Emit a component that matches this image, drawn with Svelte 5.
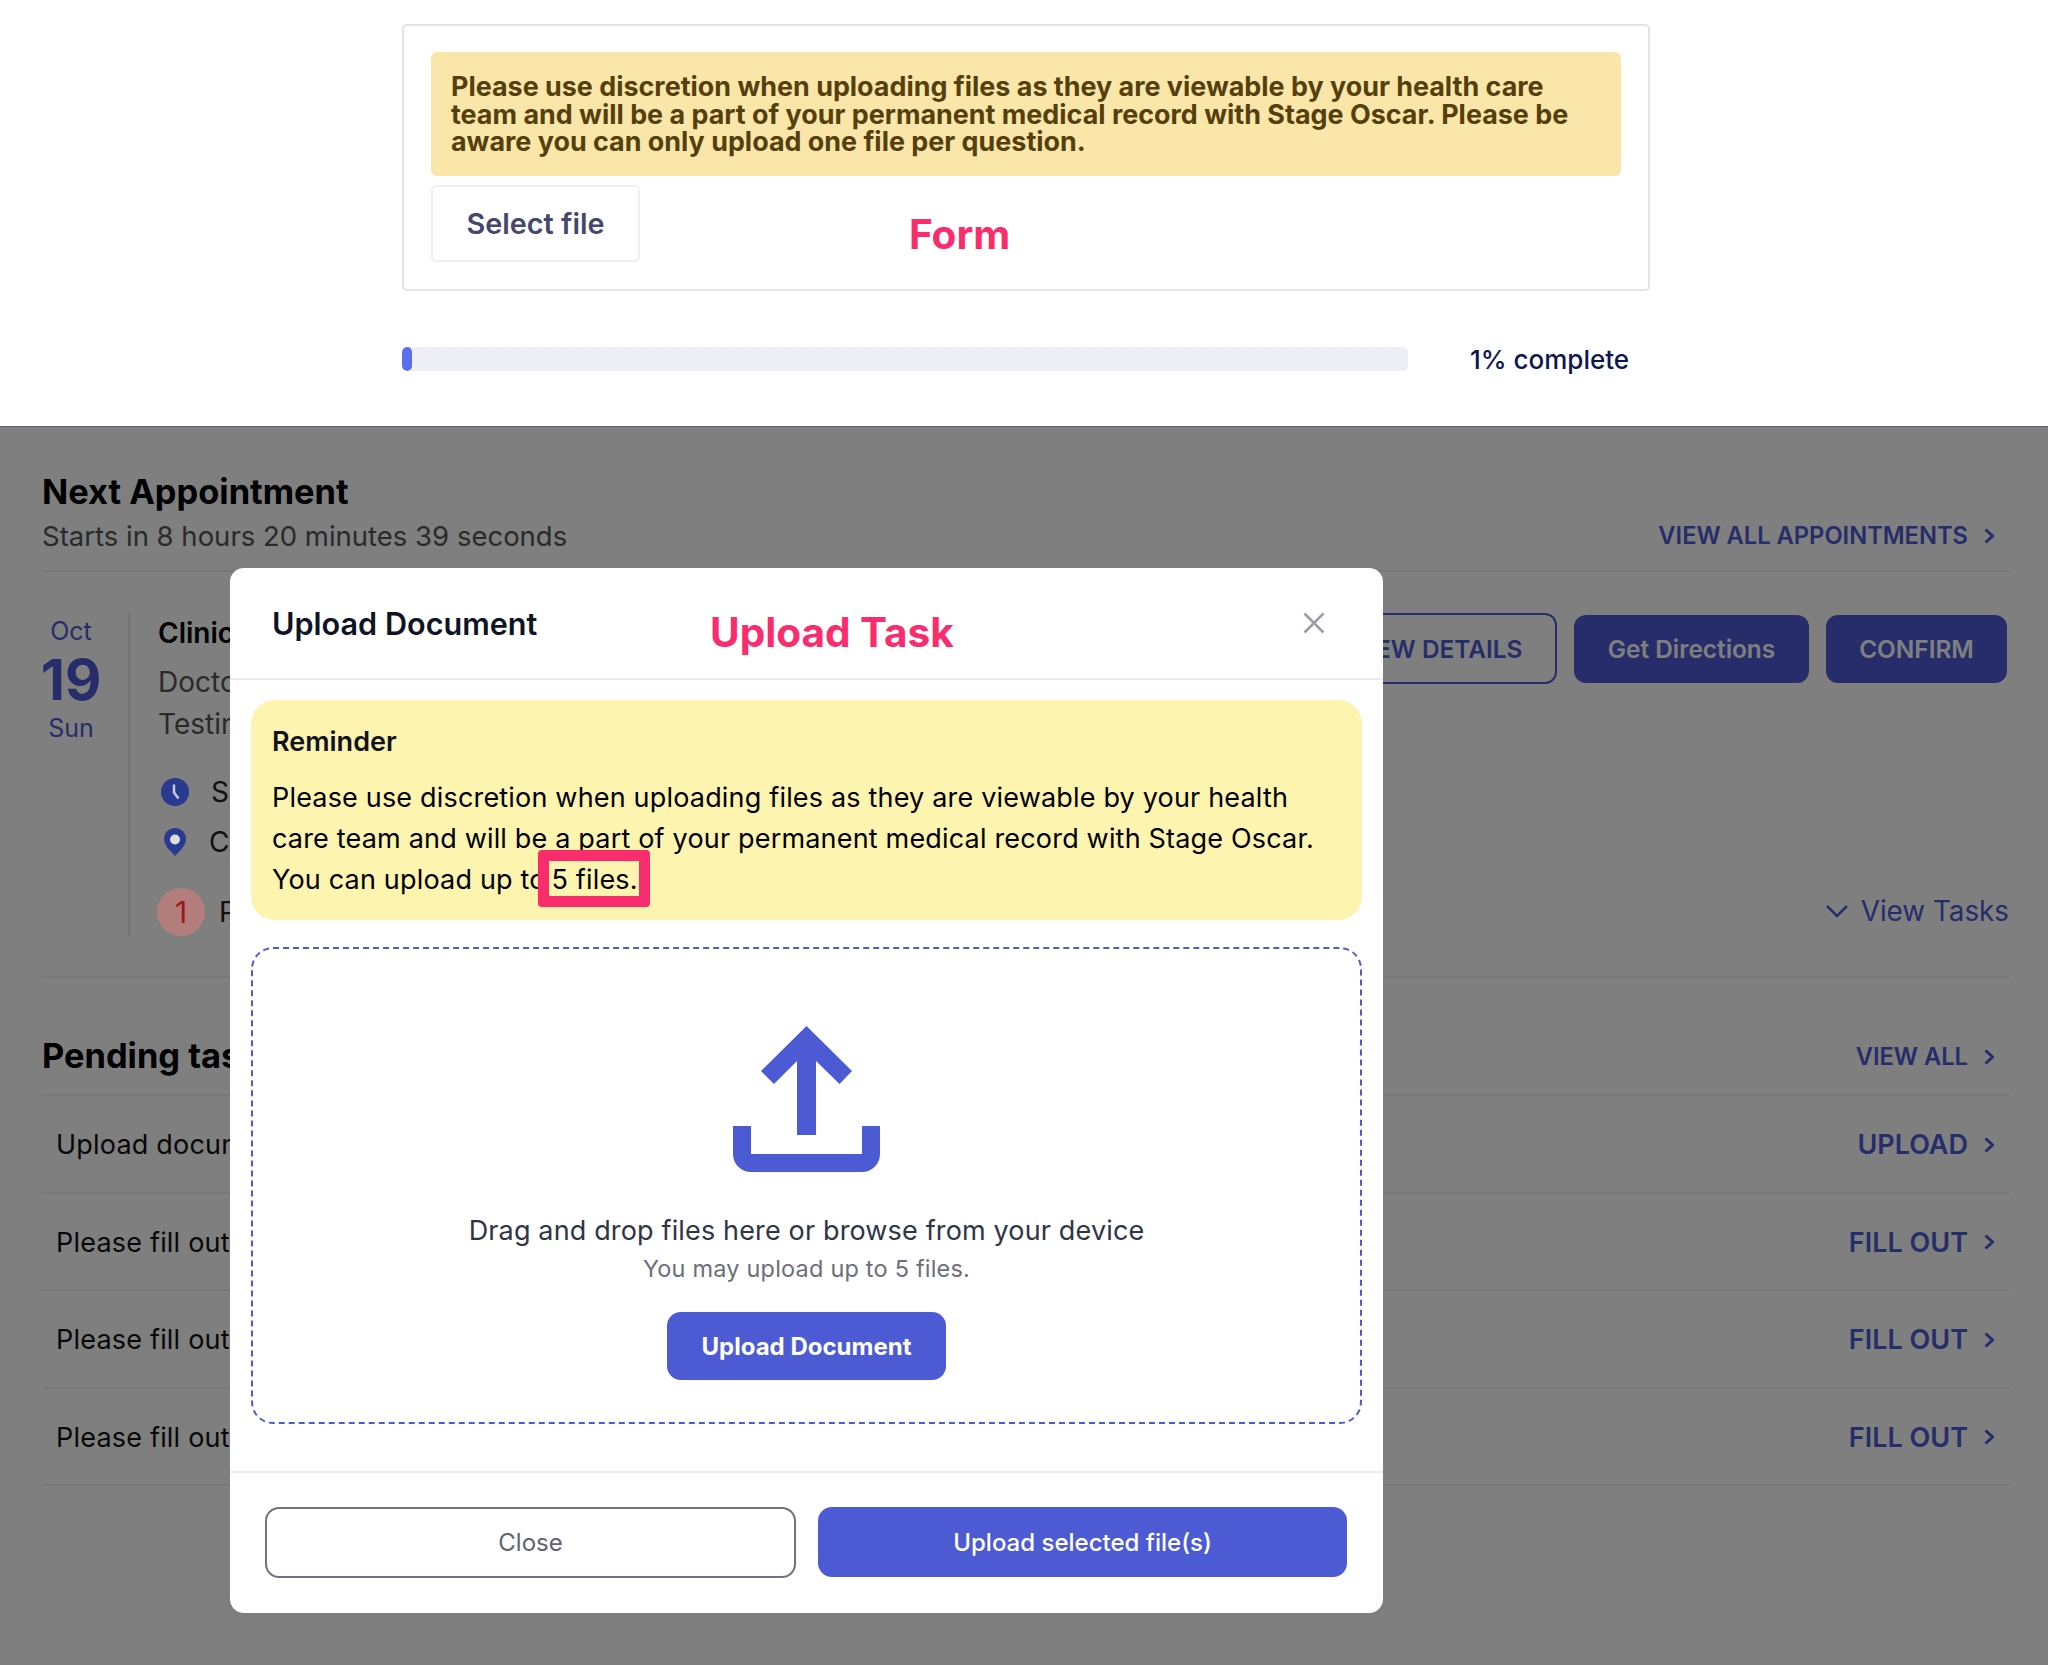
<script>
  const tasks = [
    { label: 'Upload documents', action: 'UPLOAD' },
    { label: 'Please fill out the intake form', action: 'FILL OUT' },
    { label: 'Please fill out the health history', action: 'FILL OUT' },
    { label: 'Please fill out the consent form', action: 'FILL OUT' }
  ];
</script>

<div class="page">
  <section class="form-area">
    <div class="form-card">
      <div class="notice">Please use discretion when uploading files as they are viewable by your health care team and will be a part of your permanent medical record with Stage Oscar. Please be aware you can only upload one file per question.</div>
      <button class="select">Select file</button>
    </div>
    <div class="progress-row">
      <div class="track"><div class="fill"></div></div>
      <span class="pct">1% complete</span>
    </div>
    <span class="tag tag-form">Form</span>
  </section>

  <section class="dash">
    <div class="head">
      <div>
        <h2>Next Appointment</h2>
        <p class="sub">Starts in 8 hours 20 minutes 39 seconds</p>
      </div>
      <a class="link">VIEW ALL APPOINTMENTS
        <svg class="chev" viewBox="0 0 10 16"><path d="M1.500 1.500l7 6.500-7 6.500"/></svg>
      </a>
    </div>

    <div class="appt">
      <div class="date">
        <span>Oct</span>
        <strong>19</strong>
        <span class="day">Sun</span>
      </div>
      <div class="info">
        <div class="clinic">Clinic visit</div>
        <div class="muted">Doctor Smith</div>
        <div class="muted">Testing location</div>
        <div class="meta first">
          <svg class="ic" viewBox="0 0 28 28"><circle cx="14" cy="14" r="14" fill="#2a3a90"/><path d="M13 6.500v8l4.500 6" stroke="#c4c8dc" stroke-width="2.500" fill="none"/></svg>
          <span>Scheduled</span>
        </div>
        <div class="meta second">
          <svg class="ic" viewBox="0 0 28 28"><path fill="#2a3a90" d="M14 0c6.500 0 11 5 11 11 0 6-6 12-11 17C9 23 3 17 3 11 3 5 7.500 0 14 0z"/><circle cx="14" cy="11.500" r="5" fill="#dcdde4"/></svg>
          <span>Clinic</span>
        </div>
        <div class="pending">
          <span class="badge">1</span>
          <span>Pending</span>
        </div>
      </div>
      <div class="appt-right">
        <div class="btns">
          <button class="outline">VIEW DETAILS</button>
          <button class="solid dir">Get Directions</button>
          <button class="solid conf">CONFIRM</button>
        </div>
        <a class="tasks-link">
          <svg class="down" viewBox="0 0 24 14"><path d="M2 2l10 10L22 2"/></svg>
          View Tasks
        </a>
      </div>
    </div>

    <div class="pending-head">
      <h2>Pending tasks</h2>
      <a class="link">VIEW ALL
        <svg class="chev" viewBox="0 0 10 16"><path d="M1.500 1.500l7 6.500-7 6.500"/></svg>
      </a>
    </div>
    <ul class="rows">
      {#each tasks as t}
        <li>
          <span>{t.label}</span>
          <a class="row-link">{t.action}
            <svg class="chev" viewBox="0 0 10 16"><path d="M1.500 1.500l7 6.500-7 6.500"/></svg>
          </a>
        </li>
      {/each}
    </ul>

    <div class="scrim"></div>

    <div class="modal">
      <header>
        <h3>Upload Document</h3>
        <svg class="x" viewBox="0 0 22 22"><path d="M1.500 1.500l19 19M20.500 1.500l-19 19"/></svg>
      </header>
      <div class="reminder">
        <h4>Reminder</h4>
        <p>Please use discretion when uploading files as they are viewable by your health care team and will be a part of your permanent medical record with Stage Oscar. You can upload up to <mark>5 files.</mark></p>
      </div>
      <div class="drop">
        <svg class="upload" viewBox="0 0 148 147">
          <path d="M73.500 0L119 45 106.500 58 83 35v74H64V35L41 58 28 45z"/>
          <path d="M0 100h18v28h111v-28h18v28a18 18 0 0 1-18 18H18a18 18 0 0 1-18-18z"/>
        </svg>
        <div class="drag">Drag and drop files here or browse from your device</div>
        <div class="may">You may upload up to 5 files.</div>
        <button class="upload-btn">Upload Document</button>
      </div>
      <footer>
        <button class="close">Close</button>
        <button class="send">Upload selected file(s)</button>
      </footer>
    </div>
    <span class="tag tag-task">Upload Task</span>
  </section>
</div>

<style>
  :global(body) { margin: 0; background: #fff; }
  * { box-sizing: border-box; }
  .page { width: 2048px; height: 1665px; overflow: hidden; font-family: Inter, "Liberation Sans", sans-serif; color: #000; }
  h2, h3, h4, p, ul { margin: 0; padding: 0; }
  button { font-family: inherit; cursor: pointer; }

  .form-area { position: relative; height: 426px; padding: 24px 0 0 402px; }
  .form-card { width: 1248px; height: 267px; border: 2px solid #e3e4e8; border-radius: 5px; padding: 26px 27px 0; }
  .notice { width: 1190px; height: 124px; background: #fbe6a9; border-radius: 6px; padding: 21px 20px; font-size: 26.900px; line-height: 27.500px; font-weight: 700; color: #553f0d; }
  .select { display: block; margin-top: 9px; width: 209px; height: 77px; background: #fff; border: 2px solid #eeeff2; border-radius: 5px; font-size: 28.800px; font-weight: 600; color: #45476f; }
  .progress-row { display: flex; align-items: center; margin-top: 52px; }
  .track { width: 1006px; height: 24px; background: #eeeff4; border-radius: 5px; overflow: hidden; }
  .fill { width: 10px; height: 100%; background: #5a6ff0; border-radius: 5px; }
  .pct { margin-left: 62px; padding-top: 1px; font-size: 26px; font-weight: 500; color: #0f1552; }
  .tag { position: absolute; font-weight: 700; font-size: 40.500px; color: #f92d6e; }
  .tag-form { left: 909px; top: 210px; }
  .tag-task { left: 710px; top: 182px; z-index: 3; }

  .dash { position: relative; height: 1239px; padding: 0 39px 0 42px; }
  .dash h2 { font-size: 34.400px; font-weight: 700; color: #000; line-height: 40px; }
  .head { display: flex; justify-content: space-between; align-items: flex-end; height: 146px; padding-top: 47px; padding-bottom: 16px; border-bottom: 2px solid #eceef0; }
  .sub { font-size: 27.500px; color: #555; line-height: 36px; margin-top: 6px; }
  .link { display: flex; align-items: center; color: #4c5bd4; font-size: 23.700px; font-weight: 600; line-height: 36px; padding-right: 15px; }
  .chev { width: 10px; height: 16px; margin-left: 16px; fill: none; stroke: #4c5bd4; stroke-width: 3; flex: none; }

  .appt { display: flex; height: 406px; border-bottom: 2px solid #eceef0; padding-top: 41px; }
  .date { width: 88px; height: 323px; border-right: 2px solid #e8e8ec; padding-right: 28px; display: flex; flex-direction: column; align-items: center; color: #4c5bd4; font-size: 25px; line-height: 36px; }
  .date strong { font-size: 56px; font-weight: 700; line-height: 60px; margin: 1px 0 1px; }
  .day { margin-top: -1px; }
  .info { width: 100px; padding-left: 28px; white-space: nowrap; font-size: 28px; color: #555; }
  .clinic { font-weight: 600; color: #000; line-height: 40px; }
  .muted { line-height: 42px; margin-top: 8px; }
  .muted + .muted { margin-top: 0; }
  .meta { display: flex; align-items: center; gap: 22px; height: 50px; color: #222; }
  .meta.first { margin-top: 22px; }
  .meta.second { gap: 20px; }
  .ic { position: relative; z-index: 1; width: 28px; height: 28px; margin-left: 3px; flex: none; }
  .pending { display: flex; align-items: center; gap: 14px; margin-top: 21px; color: #222; margin-left: -1px; }
  .badge { position: relative; z-index: 1; width: 48px; height: 48px; flex: none; border-radius: 50%; background: #b27d7b; color: #9c1a1e; display: flex; align-items: center; justify-content: center; font-size: 30px; }
  .appt-right { flex: 1; display: flex; flex-direction: column; align-items: flex-end; }
  .btns { display: flex; align-items: center; gap: 17px; padding-right: 2px; }
  .btns button { height: 68px; border-radius: 12px; font-size: 24.400px; font-weight: 600; border: 0; }
  .outline { width: 240px; height: 71px !important; background: #fff; border: 2px solid #4c5bd4 !important; color: #4c5bd4; }
  .solid { background: #4c5bd4; color: #fff; }
  .dir { width: 235px; }
  .conf { width: 181px; }
  .tasks-link { display: flex; align-items: center; gap: 12px; margin-top: 210px; color: #4c5bd4; font-size: 27.800px; }
  .down { width: 24px; height: 14px; fill: none; stroke: #4c5bd4; stroke-width: 2.500; }

  .pending-head { display: flex; justify-content: space-between; align-items: center; height: 118px; padding-top: 40px; border-bottom: 2px solid #eceef0; }
  .pending-head .link { margin-top: 2px; }
  .rows { list-style: none; }
  .rows li { display: flex; justify-content: space-between; align-items: center; height: 97.500px; padding: 2px 0 0 14px; border-bottom: 2px solid #eceef0; font-size: 27px; letter-spacing: .2px; color: #111; }
  .row-link { display: flex; align-items: center; color: #4c5bd4; font-size: 27px; letter-spacing: 0; font-weight: 600; padding-right: 15px; }

  .scrim { position: absolute; inset: 0; background: rgba(0, 0, 0, .5); border-top: 1px solid #5a5f7a; }

  .modal { position: absolute; left: 230px; top: 142px; width: 1153px; height: 1045px; background: #fff; border-radius: 14px; display: flex; flex-direction: column; z-index: 2; }
  .modal header { display: flex; justify-content: space-between; height: 112px; padding: 36px 58px 0 42px; border-bottom: 2px solid #e9ebee; }
  .modal h3 { font-size: 30.600px; font-weight: 600; color: #0e1326; line-height: 40px; margin: 0; }
  .x { width: 22px; height: 22px; margin-top: 8px; fill: none; stroke: #9a9da5; stroke-width: 2.500; }
  .reminder { margin: 20px 21px 0; height: 220px; background: #fdf4b0; border-radius: 24px; padding: 22px 21px; color: #000; }
  .reminder h4 { font-size: 27px; font-weight: 600; line-height: 40px; margin: 0 0 15px; color: #10131c; }
  .reminder p { font-size: 27px; line-height: 41px; letter-spacing: .18px; margin: 0; }
  mark { background: transparent; color: inherit; border: 11px solid #f92d6e; border-radius: 4px; padding: 2px 1px 0 2px; margin: 0 -11px 0 -15px; }
  .drop { margin: 27px 21px 0; height: 477px; border: 2px dashed #4c5bd4; border-radius: 22px; display: flex; flex-direction: column; align-items: center; padding-top: 77px; }
  .upload { width: 148px; height: 147px; fill: #4c5bd4; flex: none; }
  .drag { margin-top: 40px; font-size: 27px; line-height: 36px; color: #2f3547; letter-spacing: .15px; }
  .may { margin-top: 4px; font-size: 23.500px; line-height: 32px; color: #6b6f7c; letter-spacing: .2px; }
  .upload-btn { margin-top: 27px; width: 279px; height: 68px; background: #4c5bd4; color: #fff; border: 0; border-radius: 14px; font-size: 24px; font-weight: 700; }
  .modal footer { margin-top: 47px; border-top: 2px solid #e9ebee; display: flex; gap: 22px; padding: 34px 36px 0 35px; }
  .close { width: 531px; height: 71px; background: #fff; border: 2px solid #70737f; border-radius: 14px; font-size: 24px; color: #5f6371; }
  .send { width: 529px; height: 70px; background: #4c5bd4; color: #fff; border: 0; border-radius: 14px; font-size: 24px; font-weight: 500; }
</style>
